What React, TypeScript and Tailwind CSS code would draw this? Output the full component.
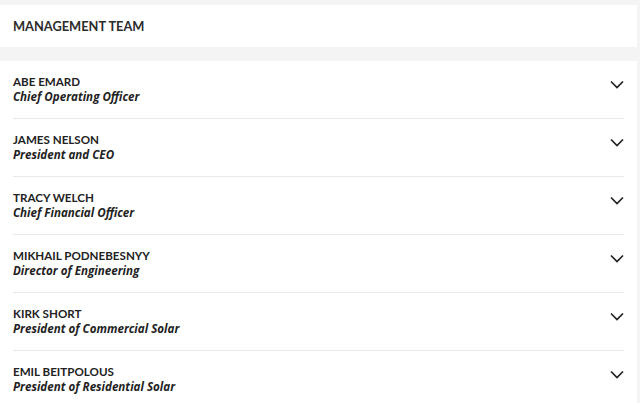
import React from "react";

const team = [
  { name: "ABE EMARD", title: "Chief Operating Officer" },
  { name: "JAMES NELSON", title: "President and CEO" },
  { name: "TRACY WELCH", title: "Chief Financial Officer" },
  { name: "MIKHAIL PODNEBESNYY", title: "Director of Engineering" },
  { name: "KIRK SHORT", title: "President of Commercial Solar" },
  { name: "EMIL BEITPOLOUS", title: "President of Residential Solar" },
];

function Chevron() {
  return (
    <svg width="14" height="9" viewBox="0 0 14 9" fill="none" className="mt-[6px]">
      <path d="M1 1.5 L7 7.5 L13 1.5" stroke="#222" strokeWidth="1.7" />
    </svg>
  );
}

export default function App() {
  return (
    <div
      className="w-[640px] h-[403px] overflow-hidden bg-[#f4f4f4] pt-[5px] pr-[3px]"
      style={{ fontFamily: "Lato, 'Open Sans', sans-serif" }}
    >
      <div className="h-[42px] bg-white flex items-center pl-[13px]">
        <h2 className="text-[12.8px] font-bold text-[#2b2b2b] leading-none">
          MANAGEMENT TEAM
        </h2>
      </div>
      <div className="mt-[14px] bg-white px-[13px] h-[400px]">
        {team.map((m) => (
          <div
            key={m.name}
            className="h-[58px] border-b border-[#e9e9e9] flex items-start justify-between pt-[13px]"
          >
            <div className="flex flex-col">
              <span className="text-[11.6px] font-bold text-[#222] leading-[15px]">{m.name}</span>
              <span className="text-[11.6px] font-bold italic text-[#222] leading-[15px] font-['Open_Sans',sans-serif]">
                {m.title}
              </span>
            </div>
            <Chevron />
          </div>
        ))}
      </div>
    </div>
  );
}
